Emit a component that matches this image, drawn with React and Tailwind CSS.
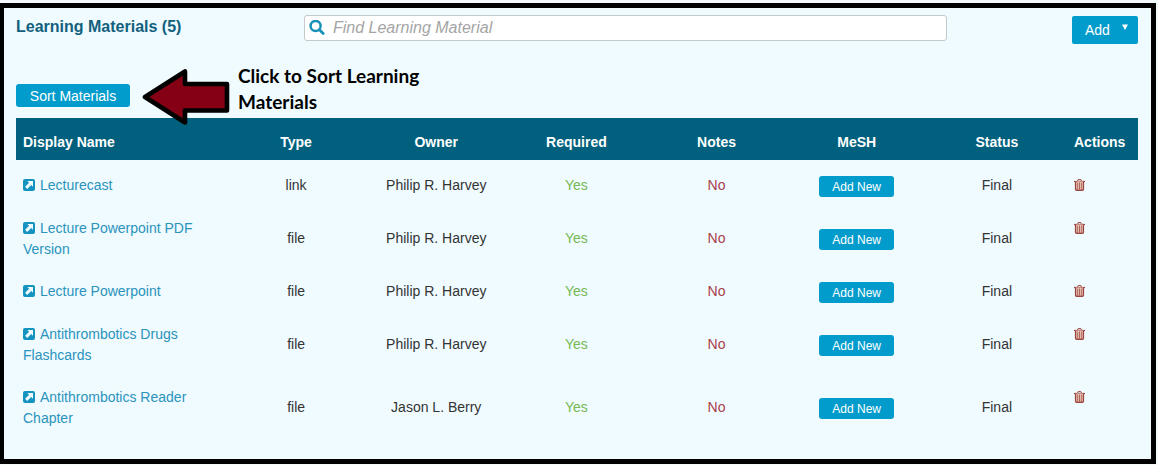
import React from "react";

const columns = ["Type", "Owner", "Required", "Notes", "MeSH", "Status"];

const materials = [
  { name: "Lecturecast", type: "link", owner: "Philip R. Harvey" },
  { name: "Lecture Powerpoint PDF Version", type: "file", owner: "Philip R. Harvey" },
  { name: "Lecture Powerpoint", type: "file", owner: "Philip R. Harvey" },
  { name: "Antithrombotics Drugs Flashcards", type: "file", owner: "Philip R. Harvey" },
  { name: "Antithrombotics Reader Chapter", type: "file", owner: "Jason L. Berry" },
];

function SearchIcon() {
  return (
    <svg viewBox="0 0 16 16" className="size-4 shrink-0" fill="none" stroke="#1990b8" aria-hidden="true">
      <circle cx="6.6" cy="6" r="5" strokeWidth="2.5" />
      <path d="M10.4 9.8L14.2 13.6" strokeWidth="2.8" strokeLinecap="round" />
    </svg>
  );
}

function LinkIcon() {
  return (
    <svg viewBox="0 0 12 12" className="mr-[5px] inline-block size-3 align-[-1px]" aria-hidden="true">
      <rect width="12" height="12" rx="2" fill="#1593bf" />
      <path d="M4.3 2H10V7.7L8.2 5.9L4.2 9.9L2.1 7.8L6.1 3.8Z" fill="#effbff" />
    </svg>
  );
}

function TrashIcon() {
  return (
    <svg viewBox="0 0 11 12" className="h-3 w-[11px]" fill="none" stroke="#9c4540" aria-hidden="true">
      <path d="M0 2.5H11" strokeWidth="1.2" />
      <path d="M3.5 2.2L4.1 0.6H6.9L7.5 2.2" />
      <path d="M1.6 2.5V10.2Q1.6 11.3 2.6 11.3H8.4Q9.4 11.3 9.4 10.2V2.5" fill="#f0d2c2" strokeWidth="1.4" />
      <path d="M3.7 3.5V10.5M5.5 3.5V10.5M7.3 3.5V10.5" strokeWidth="0.8" />
    </svg>
  );
}

function Arrow() {
  return (
    <svg viewBox="0 0 88 58" className="relative -mb-2 h-[58px] w-[88px] shrink-0" aria-hidden="true">
      <path
        d="M3 29L43 3.5V16H85V42.5H43V54.5Z"
        fill="#850014"
        stroke="#000"
        strokeWidth="4.6"
        strokeLinejoin="round"
      />
    </svg>
  );
}

export default function App() {
  return (
    <div className="bg-[#f3fafe] pt-[3px] pr-[2px] pb-px font-['Liberation_Sans',Arial,sans-serif] text-sm">
      <main className="border-[5px] border-l-4 border-black bg-[#effbff] pt-[7px] pr-[13px] pb-5 pl-3">
        <header className="grid grid-cols-[288fr_643fr_191fr] items-start">
          <h1 className="text-base leading-6 font-bold text-[#12607e]">Learning Materials (5)</h1>
          <label className="flex h-[26px] items-center gap-2 rounded-[3px] border border-[#c3c8cb] bg-white px-1">
            <SearchIcon />
            <input
              type="search"
              aria-label="Find Learning Material"
              placeholder="Find Learning Material"
              className="min-w-0 flex-1 bg-transparent text-base leading-6 outline-none placeholder:text-[#a5a5a5] placeholder:italic"
            />
          </label>
          <button className="mt-px flex h-7 w-[66px] items-center justify-self-end rounded-[2px] bg-[#029ccc] pl-[13px] text-sm text-white">
            Add
            <svg viewBox="0 0 6 6" className="mb-[6px] ml-3 size-[6px]" aria-hidden="true">
              <path d="M0 0.5H6L3 6Z" fill="#fff" />
            </svg>
          </button>
        </header>

        <div className="mt-[19px] flex items-end">
          <button className="mb-[11px] h-[23px] w-[114px] shrink-0 rounded-[3px] bg-[#029ccc] text-sm text-white">
            Sort Materials
          </button>
          <div className="ml-3 flex items-end">
            <Arrow />
            <p className="mb-[3px] ml-2 w-[200px] font-['Lato',sans-serif] text-[19px] leading-[26px] font-bold text-black">
              Click to Sort Learning Materials
            </p>
          </div>
        </div>

        <table className="w-full table-fixed border-collapse text-[#333]">
          <thead className="bg-[#00607d] text-white">
            <tr className="h-[42px]">
              <th scope="col" className="w-[210px] px-[7px] pt-[6px] text-left font-bold">Display Name</th>
              {columns.map((c) => (
                <th key={c} scope="col" className="pt-[6px] text-center font-bold">{c}</th>
              ))}
              <th scope="col" className="w-[71px] px-[7px] pt-[6px] text-left font-bold">Actions</th>
            </tr>
          </thead>
          <tbody className="leading-[21px]">
            <tr aria-hidden="true" className="h-1" />
            {materials.map((m) => (
              <tr key={m.name} className="text-center">
                <td className="px-[7px] pt-[11px] pb-[10px] text-left align-top">
                  <a href="#" className="text-[#2b93bc]">
                    <LinkIcon />
                    {m.name}
                  </a>
                </td>
                <td>{m.type}</td>
                <td>{m.owner}</td>
                <td className="text-[#76b852]">Yes</td>
                <td className="text-[#a8404a]">No</td>
                <td className="pt-[12px] pb-[10px]">
                  <button className="mx-auto block h-[21px] w-[75px] rounded-[3px] bg-[#029ccc] text-xs leading-5 text-white">
                    Add New
                  </button>
                </td>
                <td>Final</td>
                <td className="px-[7px] pt-[15px] text-left align-top">
                  <button aria-label={"Delete " + m.name} className="block">
                    <TrashIcon />
                  </button>
                </td>
              </tr>
            ))}
          </tbody>
        </table>
      </main>
    </div>
  );
}
